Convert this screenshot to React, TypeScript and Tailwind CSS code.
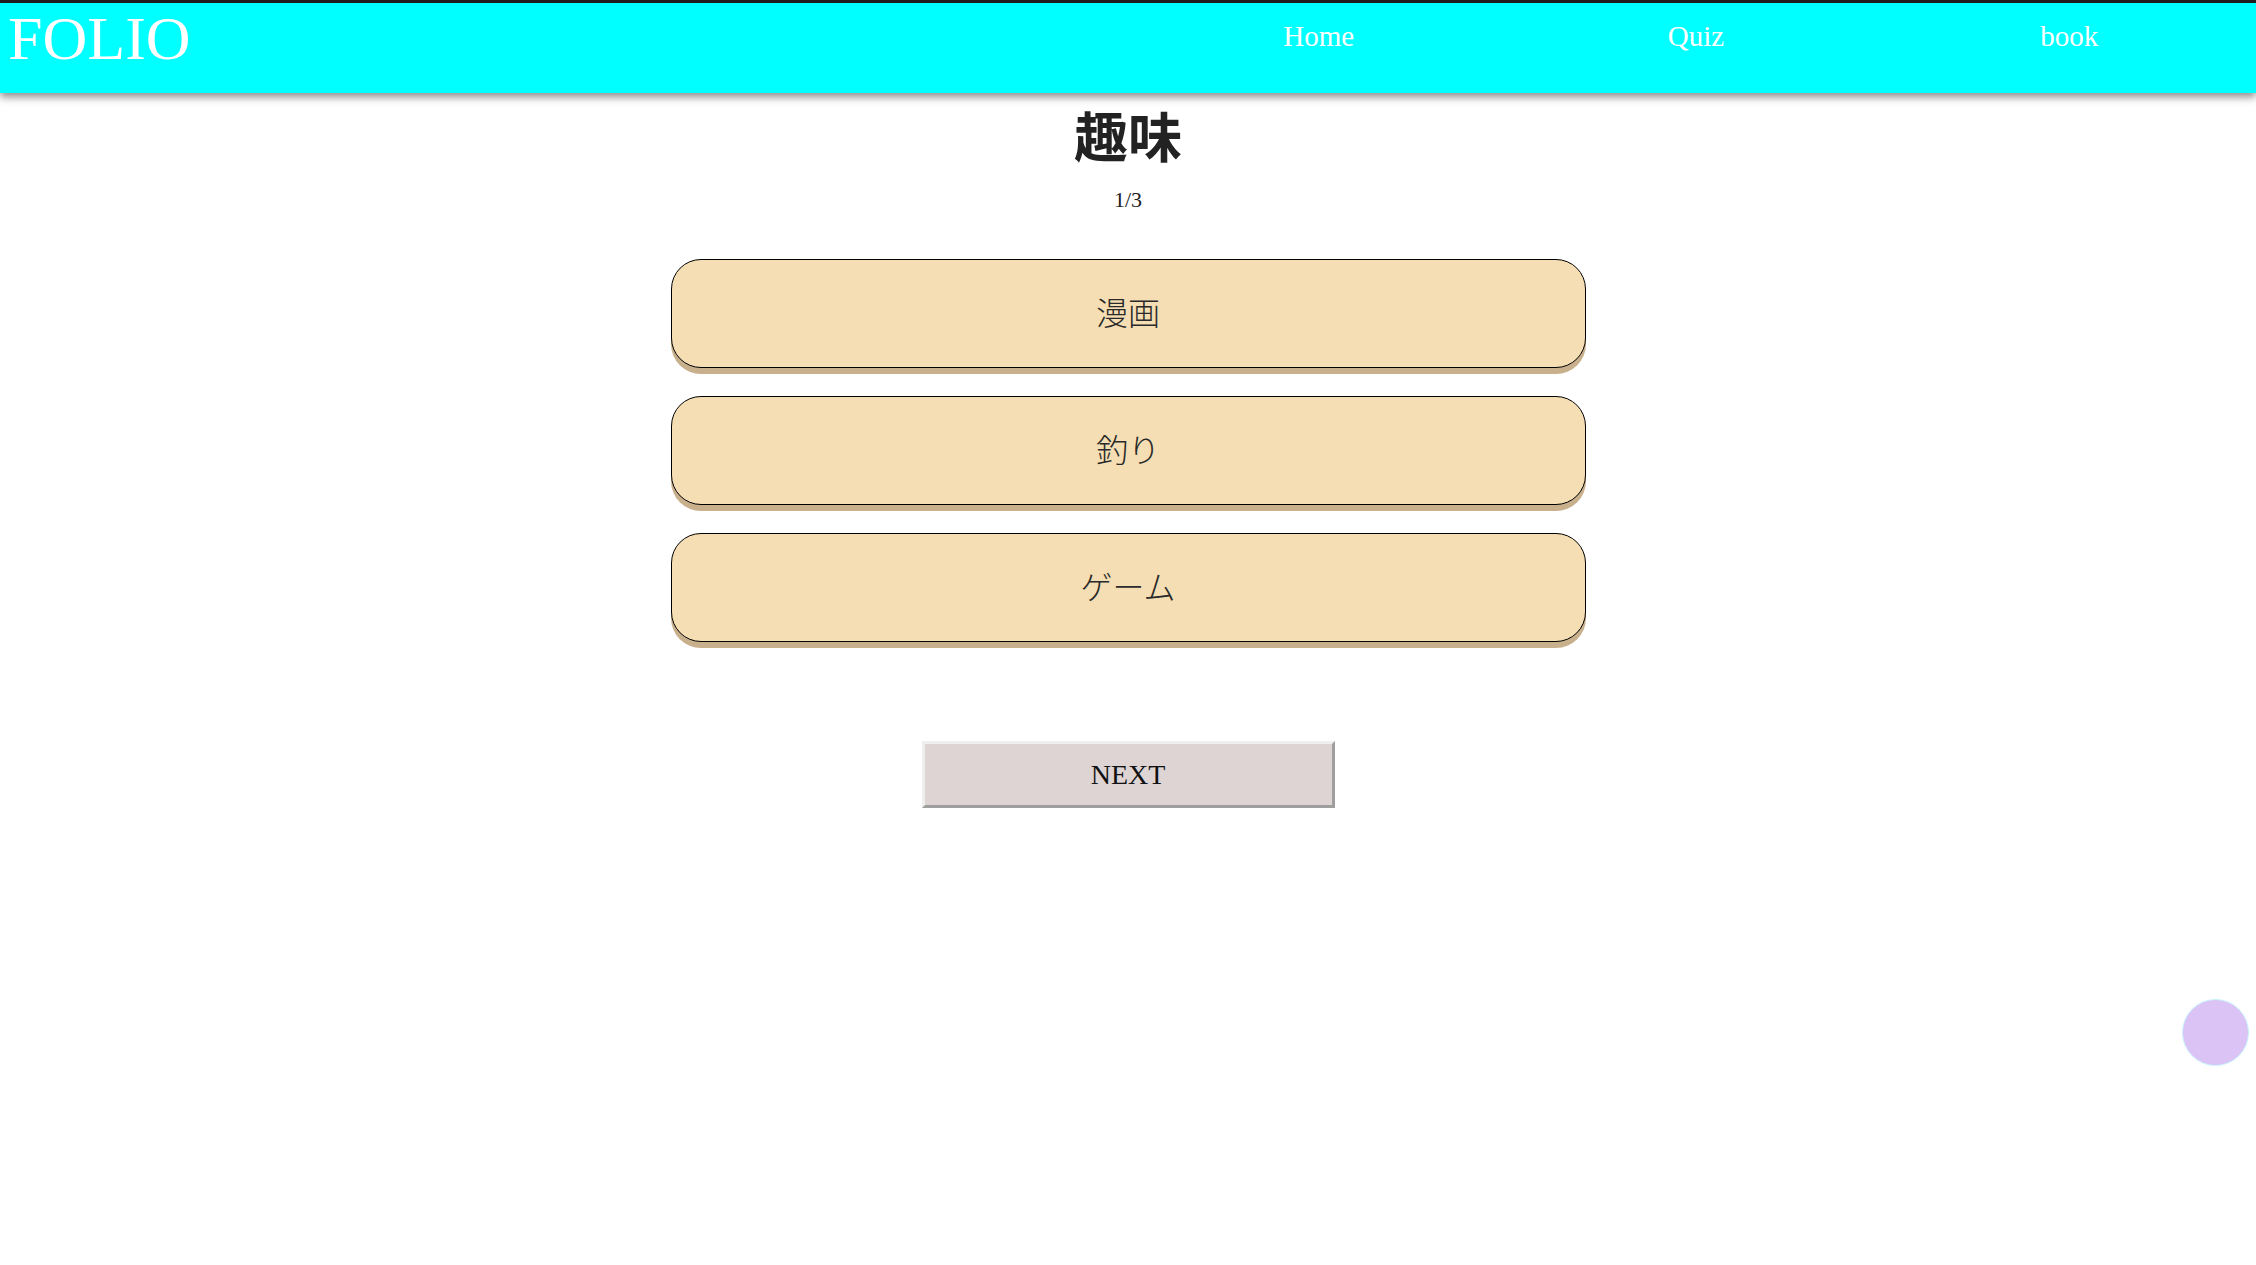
import React from "react";

const serif = { fontFamily: '"Liberation Serif", "Noto Sans CJK JP", serif' };
const cjk = { fontFamily: '"Liberation Serif", "Noto Sans CJK JP", serif' };

export default function App() {
  const options = ["漫画", "釣り", "ゲーム"];
  return (
    <div className="min-h-screen w-full bg-white" style={serif}>
      <header className="flex items-start justify-between border-t-[3px] border-[#1e1e1e] bg-[#00ffff] h-[93px] shadow-[0_4px_8px_rgba(0,0,0,0.45)] relative z-10">
        <div className="pl-[8px] pt-[4px] text-[62px] leading-none text-white">FOLIO</div>
        <nav className="flex w-[1122px] pr-[2px] pt-[19px]">
          <a className="flex-1 text-center text-[29px] leading-none text-white">Home</a>
          <a className="flex-1 pl-[8px] text-center text-[29px] leading-none text-white">Quiz</a>
          <a className="flex-1 pl-[4px] text-center text-[29px] leading-none text-white">book</a>
        </nav>
      </header>

      <main className="flex flex-col items-center">
        <h1 className="mt-[20px] text-[54px] leading-none font-bold text-[#222]" style={cjk}>
          趣味
        </h1>
        <div className="mt-[22px] text-[22px] leading-none text-[#222]">1/3</div>

        <div className="mt-[48px] flex flex-col gap-[28px]">
          {options.map((o) => (
            <button
              key={o}
              className="flex h-[109px] w-[915px] items-center justify-center rounded-[30px] border border-black bg-[#f5deb3] text-[32px] font-light text-[#2a2a2a] shadow-[0_6px_0_#c9b08c]"
              style={cjk}
            >
              {o}
            </button>
          ))}
        </div>

        <button className="mt-[99px] flex h-[67px] w-[413px] items-center justify-center border-[3px] border-t-[#efefef] border-l-[#efefef] border-r-[#9f9f9f] border-b-[#9f9f9f] bg-[#ded4d4] text-[28px] text-[#111]">
          NEXT
        </button>
      </main>

      <div className="fixed right-[7px] bottom-[199px] h-[67px] w-[67px] rounded-full border border-[#c6f3fb] bg-[#dcc3f6]" />
    </div>
  );
}
